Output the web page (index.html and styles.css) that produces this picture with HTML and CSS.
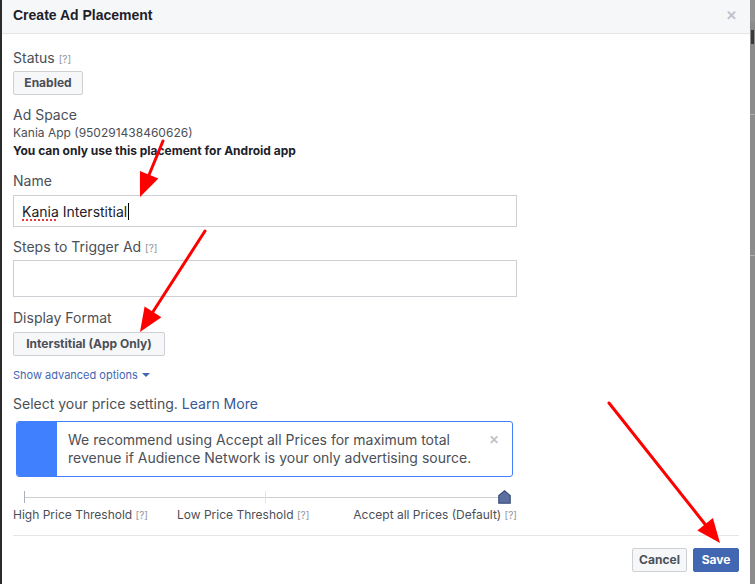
FILE: index.html
```html
<!DOCTYPE html>
<html>
<head>
<meta charset="utf-8">
<link rel="stylesheet" href="styles.css">
</head>
<body>
<div class="page">
  <div class="edge-left"></div>
  <div class="dialog">
    <div class="header">
      <span class="title">Create Ad Placement</span>
      <span class="close">&#x2715;</span>
    </div>
    <div class="content">
      <div class="label l-status">Status <span class="help">[?]</span></div>
      <div class="btn btn-enabled">Enabled</div>

      <div class="label l-adspace">Ad Space</div>
      <div class="small">Kania App (950291438460626)</div>
      <div class="small bold">You can only use this placement for Android app</div>

      <div class="label l-name">Name</div>
      <div class="input input-name"><span class="typo">Kania</span>&nbsp;Interstitial<span class="caret"></span></div>

      <div class="label l-steps">Steps to Trigger Ad <span class="help">[?]</span></div>
      <div class="input input-steps"></div>

      <div class="label l-format">Display Format</div>
      <div class="btn btn-format">Interstitial (App Only)</div>

      <div class="advanced">Show advanced options <span class="caret-down"></span></div>

      <div class="label l-price">Select your price setting. <span class="link">Learn More</span></div>

      <div class="notice">
        <div class="notice-bar"></div>
        <div class="notice-text">We recommend using Accept all Prices for maximum total revenue if Audience Network is your only advertising source.</div>
        <div class="notice-close">&#x2715;</div>
      </div>

      <div class="slider">
        <div class="track"></div>
        <div class="tick tick-start"></div>
        <div class="tick tick-mid"></div>
        <svg class="handle" width="13" height="14" viewBox="0 0 13 14"><path d="M6.5 0.8 L12.2 5.6 L12.2 13.2 L0.8 13.2 L0.8 5.6 Z" fill="#5a6f9f" stroke="#3c4f7a" stroke-width="1.2"/></svg>
      </div>
      <div class="slider-labels">
        <span class="sl sl-high">High Price Threshold <span class="help">[?]</span></span>
        <span class="sl sl-low">Low Price Threshold <span class="help">[?]</span></span>
        <span class="sl sl-all">Accept all Prices (Default) <span class="help">[?]</span></span>
      </div>
    </div>
    <div class="footer">
      <div class="btn btn-cancel">Cancel</div>
      <div class="btn btn-save">Save</div>
    </div>
  </div>
  <div class="edge-right">
    <div class="er er1"></div>
    <div class="er er2"></div>
    <div class="er er3"></div>
    <div class="er er4"></div>
  </div>
</div>
<svg class="arrows" width="755" height="584" viewBox="0 0 755 584">
  <g stroke="#ff0000" stroke-width="3" stroke-linecap="round" fill="none">
    <line x1="163" y1="141" x2="149.1" y2="174.8"/>
    <line x1="205" y1="231" x2="153" y2="311.8"/>
    <line x1="609" y1="403" x2="705.1" y2="524.2"/>
  </g>
  <g fill="#ff0000">
    <polygon points="140,197 158.4,178.6 139.9,171"/>
    <polygon points="140,332 161.4,317.2 144.6,306.4"/>
    <polygon points="720,543 712.9,518 697.3,530.4"/>
  </g>
</svg>
</body>
</html>
```
FILE: styles.css
```css
html, body {
  margin: 0;
  padding: 0;
}
body {
  width: 755px;
  height: 584px;
  overflow: hidden;
  background: #7a7a7a;
  font-family: Inter, "Liberation Sans", Arial, sans-serif;
  color: #4b4f56;
  position: relative;
}
.page {
  display: flex;
  height: 584px;
}
.edge-left {
  width: 2px;
  background: #2b2b2b;
}
.dialog {
  width: 748px;
  height: 584px;
  background: #fff;
  display: flex;
  flex-direction: column;
}
.edge-right {
  flex: 1;
  background: #8c8c8c;
  display: flex;
  flex-direction: column;
}
.er { background: #6d6d6d; }
.er1 { height: 22px; background: #929292; }
.er2 { height: 14px; background: #3a3a3a; margin: 8px 0 0 1px; width: 3px; }
.er3 { height: 1px; background: #b0b0b0; margin-top: 70px; }
.er4 { height: 1px; background: #b0b0b0; margin-top: 140px; }

.header {
  height: 34px;
  box-sizing: border-box;
  background: #f6f7f9;
  border-bottom: 1px solid #e5e5e5;
  display: flex;
  align-items: center;
  justify-content: space-between;
  padding: 0 13px 0 11px;
}
.title {
  font-family: "Liberation Sans", Arial, sans-serif;
  font-size: 14px;
  font-weight: bold;
  color: #1d2129;
  margin-top: -4px;
}
.close {
  font-size: 13px;
  font-weight: bold;
  color: #bec2c9;
  margin-top: -3px;
}
.content {
  padding: 0 0 0 11px;
  display: flex;
  flex-direction: column;
  align-items: flex-start;
}
.label {
  font-size: 14px;
  line-height: 18px;
  color: #4b4f56;
}
.help {
  font-size: 10px;
  color: #90949c;
}
.l-status { margin-top: 15px; }
.btn {
  box-sizing: border-box;
  height: 24px;
  line-height: 22px;
  padding: 0 8px;
  font-size: 12px;
  font-weight: bold;
  border: 1px solid #ced0d4;
  border-radius: 2px;
  background: #f6f7f9;
  color: #4b4f56;
}
.btn-enabled { margin-top: 3px; width: 70px; text-align: center; padding: 0; }
.l-adspace { margin-top: 11px; }
.small {
  font-size: 12px;
  line-height: 18px;
  color: #4b4f56;
}
.bold { font-weight: bold; color: #1d2129; }
.l-name { margin-top: 12px; }
.input {
  box-sizing: border-box;
  width: 504px;
  border: 1px solid #ccd0d5;
  background: #fff;
  font-size: 14px;
  color: #1d2129;
  padding-left: 8px;
  display: flex;
  align-items: center;
}
.input-name { margin-top: 5px; height: 32px; }
.typo {
  text-decoration: underline dotted #e0393e;
  text-decoration-thickness: 2px;
  text-underline-offset: 3px;
}
.caret {
  display: inline-block;
  width: 1px;
  height: 17px;
  background: #000;
  margin-left: 1px;
}
.l-steps { margin-top: 11px; }
.input-steps { margin-top: 3px; height: 37px; }
.l-format { margin-top: 12px; }
.btn-format { margin-top: 5px; width: 152px; text-align: center; padding: 0; }
.advanced {
  margin-top: 11px;
  font-size: 11px;
  line-height: 16px;
  color: #4267b2;
  display: flex;
  align-items: center;
}
.caret-down {
  display: inline-block;
  width: 0;
  height: 0;
  border-left: 4px solid transparent;
  border-right: 4px solid transparent;
  border-top: 4px solid #4267b2;
  margin-left: 4px;
}
.l-price { margin-top: 12px; }
.link { color: #365899; }
.notice {
  margin-top: 8px;
  margin-left: 3px;
  width: 497px;
  height: 56px;
  box-sizing: border-box;
  border: 1px solid #4080ff;
  border-radius: 3px;
  display: flex;
  overflow: hidden;
}
.notice-bar {
  width: 40px;
  background: #4080ff;
  flex: none;
}
.notice-text {
  flex: 1;
  font-size: 14px;
  line-height: 18px;
  color: #4b4f56;
  padding: 9px 0 0 11px;
}
.notice-close {
  width: 30px;
  flex: none;
  font-size: 12px;
  font-weight: bold;
  color: #bec2c9;
  padding: 10px 0 0 7px;
  box-sizing: border-box;
}
.slider {
  position: relative;
  width: 504px;
  height: 14px;
  margin-top: 13px;
}
.track {
  position: absolute;
  left: 11px;
  right: 11px;
  top: 7px;
  height: 1px;
  background: #ccd0d5;
}
.tick {
  position: absolute;
  top: 1px;
  width: 1px;
  height: 12px;
  background: #ccd0d5;
}
.tick-start { left: 11px; background: #aab0ba; }
.tick-mid { left: 252px; background: #e0e3e8; }
.handle {
  position: absolute;
  left: 485px;
  top: 0;
}
.slider-labels {
  width: 504px;
  display: flex;
  font-size: 12px;
  line-height: 16px;
  margin-top: 3px;
  color: #4b4f56;
}
.sl-low { margin-left: 29px; }
.sl-all { margin-left: auto; }
.footer {
  margin: 12px 11px 0 11px;
  border-top: 1px solid #e5e5e5;
  padding-top: 12px;
  display: flex;
  justify-content: flex-end;
  gap: 6px;
}
.btn-cancel { width: 55px; text-align: center; padding: 0; }
.btn-save {
  width: 46px;
  text-align: center;
  padding: 0;
  background: #4267b2;
  border-color: #4267b2;
  color: #fff;
}
.arrows {
  position: absolute;
  left: 0;
  top: 0;
  pointer-events: none;
}
```
